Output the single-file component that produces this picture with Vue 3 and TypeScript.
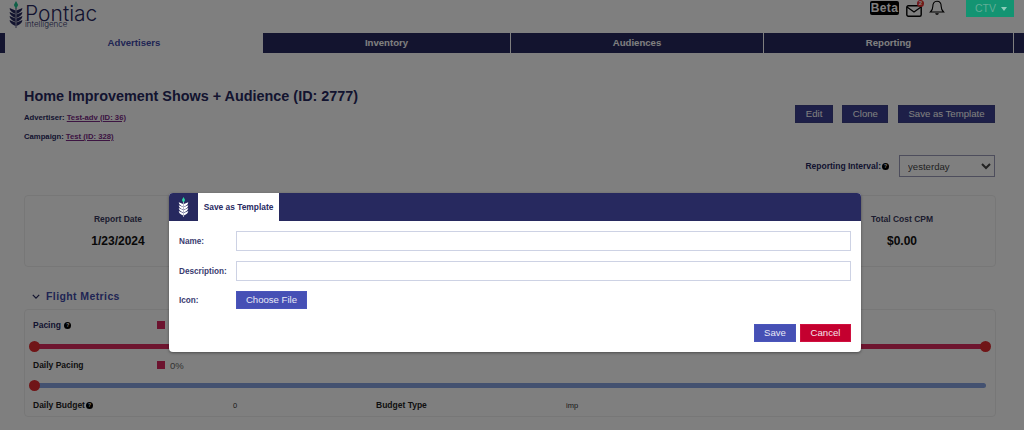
<script setup lang="ts">
const tabs = ['Advertisers', 'Inventory', 'Audiences', 'Reporting']
const leafRows = [7, 11, 15, 19]
</script>

<template>
  <div class="page">
    <header class="top">
      <div class="logo">
        <svg class="wheat-dark" viewBox="0 0 14 27" width="14" height="27">
          <path d="M7 0 L9.2 4 L7 8 L4.8 4 Z" fill="#1fc08f" />
          <path d="M7 7 V27" stroke="#27295f" stroke-width=".8" />
          <g v-for="y in leafRows" :key="y" fill="#27295f">
            <path :d="`M6.5 ${y + 2.5} L.6 ${y} Q.6 ${y + 3.5} 6.5 ${y + 6} Z`" />
            <path :d="`M7.5 ${y + 2.5} L13.4 ${y} Q13.4 ${y + 3.5} 7.5 ${y + 6} Z`" />
          </g>
        </svg>
        <div class="brand">
          <span class="brand-name">Pontiac</span>
          <span class="brand-sub">intelligence</span>
        </div>
      </div>
      <div class="top-right">
        <span class="beta">Beta</span>
        <span class="mail">
          <svg viewBox="0 0 16 12" width="16" height="12">
            <rect x=".8" y=".8" width="14.4" height="10.4" rx="1.5" fill="none" stroke="#000" stroke-width="1.4" />
            <path d="M1 2 L8 7 L15 2" fill="none" stroke="#000" stroke-width="1.3" />
          </svg>
          <i class="badge">2</i>
        </span>
        <svg class="bell" viewBox="0 0 16 16" width="16" height="16">
          <path d="M8 1.2 C5 1.2 3.8 3.6 3.8 6.4 C3.8 9.5 2.6 10.8 1.4 12 H14.6 C13.4 10.8 12.2 9.5 12.2 6.4 C12.2 3.6 11 1.2 8 1.2 Z" fill="none" stroke="#000" stroke-width="1.1" />
          <path d="M6.2 13.2 C6.5 15.2 9.5 15.2 9.8 13.2 Z" fill="#000" />
        </svg>
        <button class="ctv">CTV <span class="caret"></span></button>
      </div>
    </header>

    <nav class="tabs">
      <a v-for="(t, i) in tabs" :key="t" class="tab" :class="{ active: i === 0 }">{{ t }}</a>
    </nav>

    <main class="main">
      <div class="head">
        <div class="head-left">
          <h1>Home Improvement Shows + Audience (ID: 2777)</h1>
          <p class="meta">Advertiser: <a>Test-adv (ID: 36)</a></p>
          <p class="meta">Campaign: <a>Test (ID: 328)</a></p>
        </div>
        <div class="actions">
          <button class="navy">Edit</button>
          <button class="navy">Clone</button>
          <button class="navy">Save as Template</button>
        </div>
      </div>

      <div class="interval">
        <span class="interval-label">Reporting Interval:</span>
        <i class="help">?</i>
        <select class="select"><option>yesterday</option></select>
      </div>

      <section class="card stats">
        <div class="stat">
          <div class="stat-label">Report Date</div>
          <div class="stat-value">1/23/2024</div>
        </div>
        <div class="stat">
          <div class="stat-label">Total Cost CPM</div>
          <div class="stat-value">$0.00</div>
        </div>
      </section>

      <h2 class="section-title">
        <svg viewBox="0 0 10 6" width="8" height="5"><path d="M1 1 L5 5 L9 1" fill="none" stroke="#27295f" stroke-width="1.6" /></svg>
        Flight Metrics
      </h2>

      <section class="card flight">
        <div class="metric-row">
          <span class="metric-label pacing">Pacing <i class="help">?</i></span>
          <span class="swatch"></span>
        </div>
        <div class="track red"><span class="dot"></span><span class="dot end"></span></div>
        <div class="metric-row second">
          <span class="metric-label">Daily Pacing</span>
          <span class="swatch"></span>
          <span class="pct">0%</span>
        </div>
        <div class="track blue"><span class="dot"></span></div>
        <div class="budget-row">
          <span class="metric-label">Daily Budget<i class="help">?</i></span>
          <span class="budget-value">0</span>
          <span class="metric-label">Budget Type</span>
          <span class="budget-value">imp</span>
        </div>
      </section>
    </main>

    <div class="overlay"></div>

    <div class="modal">
      <div class="modal-head">
        <div class="modal-logo">
          <svg viewBox="0 0 14 27" width="11" height="20">
            <path d="M7 0 L9.2 4 L7 8 L4.8 4 Z" fill="#2ad6a4" />
            <path d="M7 7 V27" stroke="#fff" stroke-width=".8" />
            <g v-for="y in leafRows" :key="y" fill="#fff">
              <path :d="`M6.5 ${y + 2.5} L.6 ${y} Q.6 ${y + 3.5} 6.5 ${y + 6} Z`" />
              <path :d="`M7.5 ${y + 2.5} L13.4 ${y} Q13.4 ${y + 3.5} 7.5 ${y + 6} Z`" />
            </g>
          </svg>
        </div>
        <div class="modal-tab">Save as Template</div>
      </div>
      <div class="modal-body">
        <label class="field">
          <span>Name:</span>
          <input type="text" />
        </label>
        <label class="field">
          <span>Description:</span>
          <input type="text" />
        </label>
        <div class="field file">
          <span>Icon:</span>
          <button class="choose">Choose File</button>
        </div>
        <div class="modal-foot">
          <button class="choose save">Save</button>
          <button class="cancel">Cancel</button>
        </div>
      </div>
    </div>
  </div>
</template>

<style>
html, body { margin: 0; background: #fff; }
</style>

<style scoped>
.page {
  position: relative;
  width: 1024px;
  height: 430px;
  overflow: hidden;
  background: #fff;
  font-family: "Liberation Sans", Arial, sans-serif;
  color: #27295f;
}
.top {
  height: 33px;
  display: flex;
  justify-content: space-between;
  align-items: flex-start;
  box-sizing: border-box;
  padding: 0 10px 0 9px;
}
.logo { display: flex; align-items: flex-start; gap: 2px; padding-top: 1px; }
.brand { display: flex; flex-direction: column; }
.brand-name {
  font-family: Inter, sans-serif;
  font-weight: 300;
  font-size: 21px;
  line-height: 17px;
  margin-top: 4px;
  color: #27295f;
}
.brand-sub {
  font-family: Inter, sans-serif;
  font-weight: 300;
  font-size: 8px;
  line-height: 9px;
  margin-top: -2px;
  color: #27295f;
}
.top-right { display: flex; align-items: flex-start; }
.beta {
  background: #000;
  color: #fff;
  font-size: 12px;
  font-weight: 700;
  letter-spacing: .4px;
  line-height: 14px;
  width: 29px;
  text-align: center;
  border-radius: 2px;
  margin-top: 1px;
}
.mail { position: relative; margin: 3px 0 0 7px; display: block; height: 12px; }
.badge {
  position: absolute;
  right: -2px;
  top: -3px;
  width: 7px;
  height: 7px;
  border-radius: 50%;
  background: #e53131;
  color: #fff;
  font: 700 6px/7px "Liberation Sans", sans-serif;
  text-align: center;
  font-style: normal;
}
.bell { margin: 0 0 0 7px; }
.ctv {
  position: relative;
  z-index: 20;
  width: 48px;
  height: 17px;
  margin-left: 21px;
  border: 0;
  padding: 0 0 0 2px;
  background: #139472;
  color: #62ad97;
  font: 10.5px/17px "Liberation Sans", sans-serif;
}
.caret {
  display: inline-block;
  margin-left: 2px;
  vertical-align: 1px;
  border-left: 3.5px solid transparent;
  border-right: 3.5px solid transparent;
  border-top: 4px solid #8fcdbb;
}
.tabs {
  height: 20px;
  display: grid;
  grid-template-columns: 258px 248px 253px 250px;
  gap: 0;
  background: #27295f;
  padding: 0 10px 0 5px;
}
.tab {
  font-size: 9.6px;
  font-weight: 700;
  line-height: 20px;
  text-align: center;
  color: #fff;
  border-right: 1px solid #fff;
  box-sizing: border-box;
}
.tab.active { background: #fff; color: #3f4aa8; border-right: 0; }
.main { padding: 0 28px 0 24px; }
.head { display: flex; justify-content: space-between; align-items: flex-start; }
h1 {
  margin: 34px 0 0;
  font-size: 14.4px;
  line-height: 18px;
  font-weight: 700;
  color: #27295f;
}
.meta {
  margin: 7px 0 0;
  font-size: 7.7px;
  line-height: 11px;
  font-weight: 700;
  color: #27295f;
}
.meta + .meta { margin-top: 8px; }
.meta a { color: #7a2a85; text-decoration: underline; }
.actions { display: flex; gap: 9.5px; margin: 52px 1px 0 0; }
.navy {
  height: 18px;
  padding: 0 9.5px;
  border: 1px solid #3b3e85;
  background: #3b3e90;
  color: #fff;
  font: 9.6px/16px "Liberation Sans", sans-serif;
}
.interval {
  display: flex;
  justify-content: flex-end;
  align-items: center;
  margin: 13px 1px 0 0;
  height: 22px;
}
.interval-label { font-size: 8.5px; font-weight: 700; color: #27295f; }
.help {
  display: inline-block;
  width: 7px;
  height: 7px;
  border-radius: 50%;
  background: #000;
  color: #fff;
  font: 700 5px/7px "Liberation Sans", sans-serif;
  text-align: center;
  font-style: normal;
  margin-left: 1px;
  vertical-align: 1px;
}
.select {
  width: 96px;
  height: 22px;
  margin-left: 10px;
  background: #fff;
  border: 1px solid #9a9ab8;
  border-radius: 0;
  font: 9.6px "Liberation Sans", sans-serif;
  color: #444;
  padding-left: 4px;
}
.card {
  border: 1px solid #eee;
  border-radius: 4px;
  box-sizing: border-box;
  background: #fff;
}
.stats {
  margin-top: 18px;
  height: 72px;
  display: flex;
  justify-content: space-between;
  padding: 0 55px 0 0;
}
.stat { width: 186px; text-align: center; padding-top: 18px; }
.stats .stat:last-child { width: 76px; }
.stat-label { font-size: 8.5px; line-height: 11px; font-weight: 700; color: #3a3a60; }
.stat-value { margin-top: 9px; font-size: 12px; line-height: 14px; font-weight: 700; color: #111; }
.section-title {
  margin: 22px 0 0;
  padding-left: 8px;
  font-size: 10.5px;
  line-height: 14px;
  font-weight: 700;
  letter-spacing: .4px;
  color: #3f4aa8;
  display: flex;
  align-items: center;
  gap: 6px;
}
.flight {
  margin-top: 6px;
  height: 108px;
  padding: 0 8px;
}
.metric-row { display: flex; align-items: center; height: 14px; margin-top: 8px; }
.metric-row.second { margin-top: 9px; }
.metric-label { font-size: 8.5px; font-weight: 700; color: #222; line-height: 14px; }
.metric-label.pacing { color: #27295f; }
.metric-row .metric-label { width: 124px; }
.swatch { width: 8px; height: 8px; background: #d8265f; }
.pct { margin-left: 5px; font-size: 9.5px; color: #666; }
.track {
  position: relative;
  height: 5px;
  margin: 12px 1px 0;
  border-radius: 3px;
}
.track.red { background: #dc2a5e; }
.track.blue { background: #87a3e0; margin-top: 11px; }
.dot {
  position: absolute;
  left: -5px;
  top: -3px;
  width: 11px;
  height: 11px;
  border-radius: 50%;
  background: #e02a2e;
}
.dot.end { left: auto; right: -5px; background: #e02a2e; }
.budget-row {
  display: grid;
  grid-template-columns: 200px 143px 190px 1fr;
  margin-top: 10px;
  align-items: center;
}
.budget-value { font-size: 7.5px; color: #333; }
.overlay {
  position: absolute;
  inset: 0;
  z-index: 10;
  background: rgba(0, 0, 0, .5);
}
.modal {
  position: absolute;
  left: 169px;
  top: 193px;
  z-index: 30;
  width: 692px;
  height: 159px;
  background: #fff;
  border-radius: 4px;
  overflow: hidden;
  box-shadow: 0 1px 3px rgba(0, 0, 0, .4);
}
.modal-head { height: 28px; display: flex; background: #27295f; }
.modal-logo { width: 29px; display: flex; justify-content: center; align-items: center; }
.modal-tab {
  width: 81px;
  background: #fff;
  font-size: 8.4px;
  font-weight: 700;
  line-height: 28px;
  text-align: center;
  color: #27295f;
}
.modal-body { padding: 10px 10px 0 10px; }
.field {
  display: flex;
  align-items: center;
  height: 20px;
  margin-bottom: 10px;
}
.field span { width: 57px; font-size: 8.2px; font-weight: 700; color: #3a3c70; }
.field input {
  flex: 1;
  height: 20px;
  box-sizing: border-box;
  border: 1px solid #cdd2e4;
  border-radius: 0;
  padding: 0;
}
.field.file { height: 18px; }
.choose {
  height: 18px;
  width: 71px;
  padding: 0;
  border: 1px solid #4a55bb;
  background: #4650b5;
  color: #e8e8f6;
  font: 9.6px/16px "Liberation Sans", sans-serif;
}
.modal-foot { display: flex; justify-content: flex-end; gap: 4px; margin-top: 15px; }
.choose.save { width: 42px; }
.cancel {
  width: 51px;
  height: 18px;
  padding: 0;
  border: 1px solid #d0103f;
  background: #c4002f;
  color: #f5e5ea;
  font: 9.6px/16px "Liberation Sans", sans-serif;
}
</style>
